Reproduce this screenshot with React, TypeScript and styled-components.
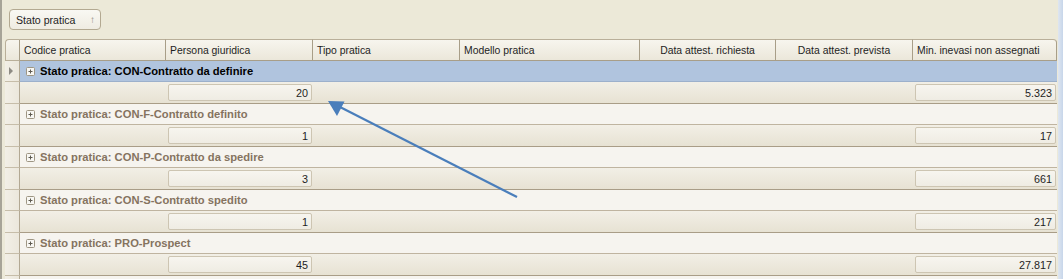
import { createGlobalStyle, styled } from 'styled-components';

const GlobalStyle = createGlobalStyle`
  html, body {
    margin: 0;
    padding: 0;
    background: #ece9d8;
    overflow: hidden;
  }
  body {
    font-family: 'Liberation Sans', Arial, sans-serif;
  }
`;

const COLUMNS = '15px 146px 147px 147px 180px 136px 137px 144px';

type Column = { label: string; align: 'left' | 'center' };

const columns: Column[] = [
  { label: 'Codice pratica', align: 'left' },
  { label: 'Persona giuridica', align: 'left' },
  { label: 'Tipo pratica', align: 'left' },
  { label: 'Modello pratica', align: 'left' },
  { label: 'Data attest. richiesta', align: 'center' },
  { label: 'Data attest. prevista', align: 'center' },
  { label: 'Min. inevasi non assegnati', align: 'left' },
];

const groups = [
  { label: 'Stato pratica: CON-Contratto da definire', count: '20', total: '5.323' },
  { label: 'Stato pratica: CON-F-Contratto definito', count: '1', total: '17' },
  { label: 'Stato pratica: CON-P-Contratto da spedire', count: '3', total: '661' },
  { label: 'Stato pratica: CON-S-Contratto spedito', count: '1', total: '217' },
  { label: 'Stato pratica: PRO-Prospect', count: '45', total: '27.817' },
];

const App = () => {
  return (
    <>
      <GlobalStyle />
      <PageS>
        <MainS>
          <GroupPanelS>
            <GroupButtonS>
              Stato pratica
              <SortArrowS>↑</SortArrowS>
            </GroupButtonS>
          </GroupPanelS>
          <GridS>
            <HeaderRowS>
              <CornerCellS />
              {columns.map((col, i) => (
                <HeaderCellS key={col.label} $align={col.align} $last={i === columns.length - 1}>
                  {col.label}
                </HeaderCellS>
              ))}
            </HeaderRowS>
            {groups.map((g, i) => (
              <GroupBlock key={g.label} label={g.label} count={g.count} total={g.total} active={i === 0} />
            ))}
            <GroupRowS>
              <IndicatorCellS />
              <GroupCellS $active={false} />
            </GroupRowS>
          </GridS>
        </MainS>
        <RightStripS />
        <ArrowS width="1063" height="279" viewBox="0 0 1063 279">
          <line x1="517" y1="197" x2="340" y2="107" stroke="#4a7ebb" strokeWidth="2.2" />
          <polygon points="328,101 344.5,101.5 337,116" fill="#4a7ebb" />
        </ArrowS>
      </PageS>
    </>
  );
};

export default App;

interface GroupBlockProps {
  label: string;
  count: string;
  total: string;
  active: boolean;
}

const GroupBlock = ({ label, count, total, active }: GroupBlockProps) => {
  return (
    <>
      <GroupRowS>
        <IndicatorCellS>{active && <RowMarkerS />}</IndicatorCellS>
        <GroupCellS $active={active}>
          <PlusBoxS>
            <svg width="9" height="9" viewBox="0 0 9 9">
              <rect x="0.5" y="0.5" width="8" height="8" rx="1" fill="#f8f7f3" stroke="#9e9684" />
              <path d="M2.5 4.5h4M4.5 2.5v4" stroke="#5e5a50" strokeWidth="1" />
            </svg>
          </PlusBoxS>
          {label}
        </GroupCellS>
      </GroupRowS>
      <FooterRowS>
        <IndicatorCellS />
        <FooterCellS />
        <FooterCellS>
          <SummaryBoxS>{count}</SummaryBoxS>
        </FooterCellS>
        <FooterCellS />
        <FooterCellS />
        <FooterCellS />
        <FooterCellS />
        <FooterCellS>
          <SummaryBoxS>{total}</SummaryBoxS>
        </FooterCellS>
      </FooterRowS>
    </>
  );
};

const PageS = styled.div`
  position: relative;
  display: flex;
  width: 1063px;
  height: 279px;
  overflow: hidden;
`;

const MainS = styled.div`
  width: 1053px;
  flex-shrink: 0;
  border-left: 2px solid #a7a498;
  padding-left: 3px;
  display: flex;
  flex-direction: column;
`;

const RightStripS = styled.div`
  width: 5px;
  flex-shrink: 0;
  background: linear-gradient(to right, #dfe6f0, #c7d6ea);
`;

const GroupPanelS = styled.div`
  flex-shrink: 0;
  height: 39px;
  box-sizing: border-box;
  padding: 9px 0 0 4px;
`;

const GroupButtonS = styled.div`
  box-sizing: border-box;
  width: 92px;
  height: 21px;
  border: 1px solid #b3a991;
  border-radius: 4px;
  background: linear-gradient(#f9f8f3, #efece2);
  display: flex;
  align-items: center;
  padding-left: 6px;
  font-size: 10.6px;
  color: #1e1e1e;
`;

const SortArrowS = styled.span`
  margin-left: auto;
  margin-right: 5px;
  font-size: 10px;
  color: #8d8a80;
`;

const GridS = styled.div`
  flex-shrink: 0;
  display: flex;
  flex-direction: column;
  width: 1052px;
`;

const RowBaseS = styled.div`
  flex-shrink: 0;
  display: grid;
  grid-template-columns: ${COLUMNS};
  box-sizing: border-box;
`;

const HeaderRowS = styled(RowBaseS)`
  height: 22px;
`;

const CornerCellS = styled.div`
  box-sizing: border-box;
  border: 1px solid #b9af99;
  border-right-color: #a89e88;
  border-top-left-radius: 4px;
  background: linear-gradient(#f7f5ee, #ebe7da);
`;

const HeaderCellS = styled.div<{ $align: 'left' | 'center'; $last: boolean }>`
  box-sizing: border-box;
  border-top: 1px solid #b9af99;
  border-bottom: 1px solid #a89e88;
  border-right: 1px solid #a89e88;
  ${({ $last }) => ($last ? 'border-top-right-radius: 4px;' : '')}
  background: linear-gradient(#f7f5ee, #ebe7da);
  display: flex;
  align-items: center;
  justify-content: ${({ $align }) => ($align === 'center' ? 'center' : 'flex-start')};
  padding-left: ${({ $align }) => ($align === 'center' ? '0' : '4px')};
  font-size: 10.4px;
  color: #1e1e1e;
  white-space: nowrap;
  overflow: hidden;
`;

const GroupRowS = styled(RowBaseS)`
  height: 21px;
`;

const IndicatorCellS = styled.div`
  box-sizing: border-box;
  border-right: 1px solid #b2a893;
  border-bottom: 1px solid #c6bda9;
  background: linear-gradient(to right, #f2efe6, #ebe7dc);
  display: flex;
  align-items: center;
  justify-content: center;
`;

const RowMarkerS = styled.span`
  width: 0;
  height: 0;
  border-top: 4px solid transparent;
  border-bottom: 4px solid transparent;
  border-left: 4px solid #8e8b84;
  margin-right: 2px;
`;

const GroupCellS = styled.div<{ $active: boolean }>`
  grid-column: 2 / -1;
  box-sizing: border-box;
  border-bottom: 1px solid ${({ $active }) => ($active ? '#9cb0cb' : '#bfb4a0')};
  background: ${({ $active }) => ($active ? '#b0c4de' : '#f6f4ef')};
  display: flex;
  align-items: center;
  padding-left: 6px;
  font-size: 11.2px;
  font-weight: bold;
  color: ${({ $active }) => ($active ? '#000000' : '#85735f')};
  white-space: nowrap;
`;

const PlusBoxS = styled.span`
  display: flex;
  margin-right: 5px;
`;

const FooterRowS = styled(RowBaseS)`
  height: 22px;
`;

const FooterCellS = styled.div`
  box-sizing: border-box;
  border-bottom: 1px solid #a99d87;
  background: linear-gradient(#f2efe6, #e7e2d3);
  padding: 2px 1px 2px 2px;
  display: flex;
`;

const SummaryBoxS = styled.div`
  flex: 1;
  box-sizing: border-box;
  border: 1px solid #cdc5b2;
  border-radius: 2px;
  background: linear-gradient(#f7f5ef, #efece3);
  display: flex;
  align-items: center;
  justify-content: flex-end;
  padding-right: 3px;
  font-size: 10.8px;
  color: #1e1e1e;
`;

const ArrowS = styled.svg`
  position: absolute;
  top: 0;
  left: 0;
  pointer-events: none;
`;
